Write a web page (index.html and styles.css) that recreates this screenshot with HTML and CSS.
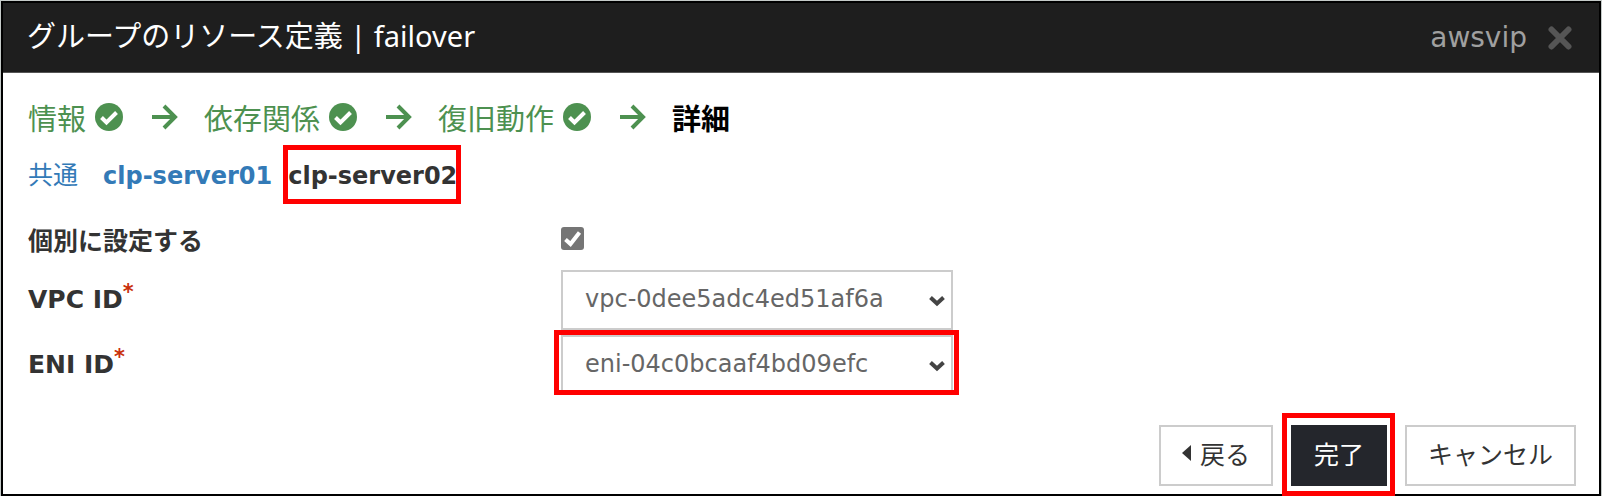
FILE: index.html
```html
<!DOCTYPE html>
<html lang="ja">
<head>
    <meta charset="UTF-8">
    <meta name="viewport" content="width=device-width, initial-scale=1.0">
    <title>グループのリソース定義 | failover</title>
    <link rel="stylesheet" href="styles.css">
</head>
<body>
    <!-- Shared icons -->
    <svg class="icon-defs" aria-hidden="true">
        <symbol id="icon-check" viewBox="0 0 28 28">
            <circle cx="14" cy="14" r="14" fill="currentColor"/>
            <path d="M6.5 14.5l5 5L21.500 9.500" fill="none" stroke="#fff" stroke-width="4"/>
        </symbol>
        <symbol id="icon-arrow" viewBox="0 0 26 26">
            <path d="M0 13h23M12 2l11 11-11 11" fill="none" stroke="currentColor" stroke-width="4"/>
        </symbol>
        <symbol id="icon-chevron" viewBox="0 0 16 12">
            <path d="M1.500 2.500l6.500 6 6.500-6" fill="none" stroke="currentColor" stroke-width="4"/>
        </symbol>
    </svg>

    <div class="dialog">
        <!-- Title bar -->
        <header class="dialog-header">
            <h1 class="dialog-title">グループのリソース定義 | failover</h1>
            <span class="resource-name">awsvip</span>
            <button type="button" class="close-button" aria-label="閉じる">
                <svg viewBox="0 0 24 24"><path d="M3.500 3.500l17 17M20.500 3.500l-17 17" fill="none" stroke="currentColor" stroke-width="6" stroke-linecap="round"/></svg>
            </button>
        </header>

        <!-- Wizard steps -->
        <ol class="steps">
            <li class="step">情報<svg class="step-check"><use href="#icon-check"/></svg><svg class="step-arrow"><use href="#icon-arrow"/></svg></li>
            <li class="step">依存関係<svg class="step-check"><use href="#icon-check"/></svg><svg class="step-arrow"><use href="#icon-arrow"/></svg></li>
            <li class="step">復旧動作<svg class="step-check"><use href="#icon-check"/></svg><svg class="step-arrow"><use href="#icon-arrow"/></svg></li>
            <li class="step current">詳細</li>
        </ol>

        <!-- Server tabs -->
        <nav class="tabs">
            <a href="#common" class="tab common">共通</a>
            <a href="#server01" class="tab">clp-server01</a>
            <a href="#server02" class="tab active marked">clp-server02</a>
        </nav>

        <!-- Settings -->
        <form class="settings">
            <div class="form-row check-row">
                <label for="individual">個別に設定する</label>
                <div class="field">
                    <div class="checkbox">
                        <input type="checkbox" id="individual" checked>
                        <svg viewBox="0 0 23 23"><path d="M4.500 12.500l5 4.500L18.500 5.500" fill="none" stroke="#fff" stroke-width="4"/></svg>
                    </div>
                </div>
            </div>
            <div class="form-row">
                <label for="vpc-id">VPC ID<sup class="required">*</sup></label>
                <div class="field">
                    <div class="select">
                        <select id="vpc-id"><option>vpc-0dee5adc4ed51af6a</option></select>
                        <svg><use href="#icon-chevron"/></svg>
                    </div>
                </div>
            </div>
            <div class="form-row">
                <label for="eni-id">ENI ID<sup class="required">*</sup></label>
                <div class="field">
                    <div class="select marked">
                        <select id="eni-id"><option>eni-04c0bcaaf4bd09efc</option></select>
                        <svg><use href="#icon-chevron"/></svg>
                    </div>
                </div>
            </div>
        </form>

        <!-- Footer buttons -->
        <footer class="dialog-footer">
            <button type="button" class="btn btn-back"><svg viewBox="0 0 9 16"><path d="M9 0v16L0 8z" fill="currentColor"/></svg>戻る</button>
            <div class="marked btn-mark">
                <button type="button" class="btn btn-primary">完了</button>
            </div>
            <button type="button" class="btn">キャンセル</button>
        </footer>
    </div>
</body>
</html>
```
FILE: styles.css
```css
* {
    box-sizing: border-box;
}

body {
    margin: 0;
    padding: 1px;
    background-color: #c4cac8;
    font-family: "DejaVu Sans", "Noto Sans CJK JP", sans-serif;
    font-size: 24px;
    color: #333333;
}

.icon-defs {
    display: none;
}

.dialog {
    border: 2px solid #000000;
    background-color: #ffffff;
}

/* Title bar */
.dialog-header {
    display: flex;
    align-items: center;
    height: 70px;
    padding: 0 27px 0 24px;
    background-color: #1e1e1e;
    border-bottom: 1px solid #555555;
    color: #ffffff;
}

.dialog-title {
    flex: 1;
    margin: 0;
    padding-bottom: 4px;
    font-family: "Noto Sans", "Noto Sans CJK JP", sans-serif;
    font-size: 29px;
    font-weight: normal;
    line-height: 40px;
}

.resource-name {
    font-size: 28px;
    line-height: 40px;
    color: #a0a0a0;
}

.close-button {
    width: 24px;
    height: 24px;
    margin-left: 21px;
    padding: 0;
    border: none;
    background: none;
    color: #555555;
    cursor: pointer;
}

.close-button svg {
    display: block;
    width: 24px;
    height: 24px;
}

/* Wizard steps */
.steps {
    display: flex;
    gap: 26px;
    margin: 0;
    padding: 24px 25px 0;
    list-style: none;
    font-family: "Noto Sans CJK JP", sans-serif;
    font-size: 29px;
    line-height: 40px;
}

.step {
    display: flex;
    align-items: center;
    color: #4d9150;
}

.step.current {
    color: #000000;
    font-weight: bold;
}

.step-check {
    width: 28px;
    height: 28px;
    margin: 0 29px 0 9px;
}

.step-arrow {
    width: 26px;
    height: 26px;
}

/* Server tabs */
.tabs {
    display: flex;
    align-items: center;
    margin-top: 13px;
    padding: 0 25px;
}

.tab {
    padding-top: 3px;
    font-size: 24px;
    line-height: 46px;
    font-weight: bold;
    color: #337ab7;
    text-decoration: none;
}

.tab.common {
    margin-right: 25px;
    font-size: 25px;
    font-weight: normal;
}

.tab.active {
    margin-left: 16px;
    color: #333333;
}

/* Red frames */
.marked {
    position: relative;
}

.marked::after {
    content: "";
    position: absolute;
    inset: -5px -6px 0 -7px;
    border: 5px solid #ff0000;
    pointer-events: none;
}

.tab.marked::after {
    inset: -5px -4px -5px -5px;
}

.btn-mark::after {
    inset: -12px -8px -10px -9px;
}

/* Settings */
.settings {
    padding-top: 19px;
}

.form-row {
    display: grid;
    grid-template-columns: 1fr 2fr;
    align-items: center;
    margin-bottom: 5px;
}

.form-row label {
    padding: 0 25px;
    font-size: 25px;
    font-weight: bold;
    line-height: 40px;
}

.field {
    padding: 0 26px;
}

.check-row {
    align-items: start;
}

.check-row label {
    line-height: 47px;
}

.required {
    line-height: 0;
    color: #c9300c;
}

.checkbox {
    position: relative;
    width: 23px;
    height: 23px;
    margin-top: 9px;
}

.checkbox input {
    appearance: none;
    display: block;
    width: 23px;
    height: 23px;
    margin: 0;
    border-radius: 3px;
    background-color: #757575;
}

.checkbox svg {
    position: absolute;
    inset: 0;
    pointer-events: none;
}

.select {
    position: relative;
    width: 392px;
}

.select select {
    appearance: none;
    display: block;
    width: 100%;
    height: 60px;
    padding: 0 48px 3px 22px;
    border: 2px solid #cccccc;
    border-radius: 0;
    background-color: #ffffff;
    font: inherit;
    color: #666666;
}

.select svg {
    position: absolute;
    right: 8px;
    top: 25px;
    width: 16px;
    height: 12px;
    color: #444444;
    pointer-events: none;
}

/* Footer buttons */
.dialog-footer {
    display: flex;
    justify-content: flex-end;
    gap: 18px;
    padding: 25px 23px 8px;
}

.btn {
    display: flex;
    align-items: center;
    height: 61px;
    padding: 0 21px 6px;
    border: 2px solid #cccccc;
    background-color: #ffffff;
    font-family: "Noto Sans CJK JP", sans-serif;
    font-size: 25px;
    color: #333333;
    cursor: pointer;
}

.btn-back svg {
    width: 9px;
    height: 16px;
    margin-right: 9px;
}

.btn-primary {
    border-color: #24262c;
    background-color: #24262c;
    color: #ffffff;
}
```
